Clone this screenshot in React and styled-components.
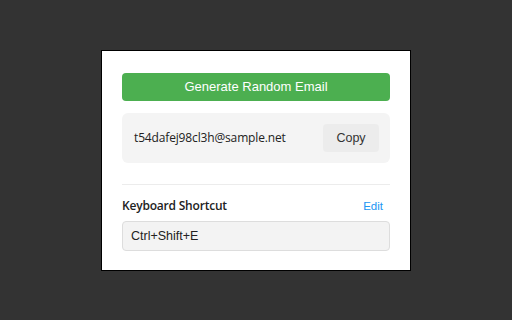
import React from "react";
import styled, { createGlobalStyle } from "styled-components";

const Global = createGlobalStyle`
  html, body { margin: 0; padding: 0; background: #333333; }
  body { font-family: "Liberation Sans", Arial, sans-serif; }
`;

const Stage = styled.div`
  width: 512px;
  height: 320px;
  display: flex;
  align-items: center;
  justify-content: center;
`;

const Panel = styled.div`
  box-sizing: border-box;
  width: 310px;
  height: 221px;
  background: #ffffff;
  border: 1px solid #000000;
  padding: 22px 20px 19px;
  display: flex;
  flex-direction: column;
`;

const PrimaryButton = styled.button`
  height: 28px;
  border: none;
  border-radius: 4px;
  background: #4caf50;
  color: #ffffff;
  font-family: "Liberation Sans", Arial, sans-serif;
  font-size: 13px;
  padding: 0;
  cursor: pointer;
`;

const EmailBox = styled.div`
  margin-top: 12px;
  height: 50px;
  box-sizing: border-box;
  background: #f4f4f4;
  border-radius: 6px;
  display: flex;
  align-items: center;
  justify-content: space-between;
  padding: 0 11px 0 12px;
`;

const EmailText = styled.span`
  font-family: "Open Sans", "Noto Sans", sans-serif;
  font-size: 12px;
  color: #222222;
  letter-spacing: -0.15px;
`;

const CopyButton = styled.button`
  width: 56px;
  height: 28px;
  border: none;
  border-radius: 4px;
  background: #ececec;
  color: #333333;
  font-family: "Liberation Sans", Arial, sans-serif;
  font-size: 12.5px;
  padding: 0;
`;

const Divider = styled.hr`
  margin: 21px 0 0;
  border: none;
  border-top: 1px solid #ececec;
  height: 0;
`;

const HeaderRow = styled.div`
  margin-top: 12px;
  height: 18px;
  display: flex;
  align-items: center;
  justify-content: space-between;
`;

const Label = styled.span`
  font-family: "Open Sans", "Noto Sans", sans-serif;
  font-weight: 600;
  font-size: 12px;
  letter-spacing: -0.2px;
  color: #222222;
`;

const LinkButton = styled.button`
  border: none;
  background: none;
  color: #2196f3;
  font-family: "Liberation Sans", Arial, sans-serif;
  font-size: 11.5px;
  padding: 0 7px 0 0;
`;

const ShortcutInput = styled.input`
  margin-top: 6px;
  height: 30px;
  box-sizing: border-box;
  background: #f3f3f3;
  border: 1px solid #dddddd;
  border-radius: 4px;
  padding: 0 8px;
  font-family: "Liberation Sans", Arial, sans-serif;
  font-size: 12.5px;
  color: #222222;
  outline: none;
`;

export default function App() {
  return (
    <>
      <Global />
      <Stage>
        <Panel>
          <PrimaryButton>Generate Random Email</PrimaryButton>
          <EmailBox>
            <EmailText>t54dafej98cl3h@sample.net</EmailText>
            <CopyButton>Copy</CopyButton>
          </EmailBox>
          <Divider />
          <HeaderRow>
            <Label>Keyboard Shortcut</Label>
            <LinkButton>Edit</LinkButton>
          </HeaderRow>
          <ShortcutInput readOnly value="Ctrl+Shift+E" />
        </Panel>
      </Stage>
    </>
  );
}
